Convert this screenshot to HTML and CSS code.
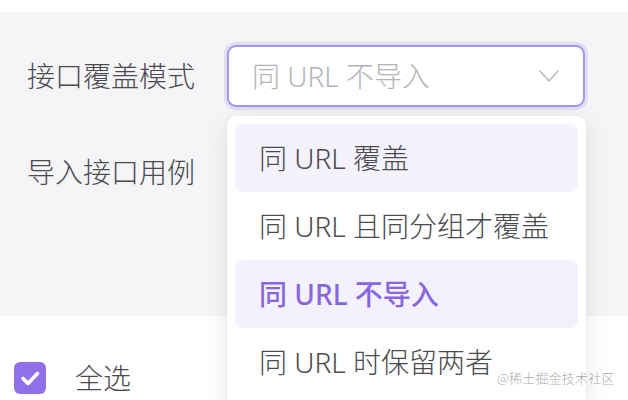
FILE: index.html
```html
<!DOCTYPE html>
<html lang="zh-CN">
<head>
<meta charset="utf-8">
<title>导入设置</title>
<link rel="stylesheet" href="styles.css">
</head>
<body>
<div class="page">
  <div class="top-gap"></div>
  <section class="form">
    <div class="label">接口覆盖模式</div>
    <div class="select">
      <span class="placeholder">同 URL 不导入</span>
      <svg class="chevron" width="20" height="12" viewBox="0 0 20 12"><polyline points="1,1 10,11 19,1" fill="none" stroke="#b9b9bd" stroke-width="1.6" stroke-linecap="round" stroke-linejoin="round"/></svg>
    </div>
    <div class="label">导入接口用例</div>
    <div></div>
  </section>
  <section class="bottom">
    <span class="checkbox">
      <svg width="32" height="32" viewBox="0 0 32 32"><path d="M9 16.5 L14 21.5 L23.5 11.5" fill="none" stroke="#fff" stroke-width="3.6" stroke-linecap="round" stroke-linejoin="round"/></svg>
    </span>
    <span class="check-label">全选</span>
  </section>

  <ul class="dropdown">
    <li class="option hover">同 URL 覆盖</li>
    <li class="option">同 URL 且同分组才覆盖</li>
    <li class="option selected">同 URL 不导入</li>
    <li class="option">同 URL 时保留两者</li>
  </ul>
  <div class="watermark">@稀土掘金技术社区</div>
</div>
</body>
</html>
```
FILE: styles.css
```css
html, body {
  margin: 0;
  padding: 0;
  height: 400px;
  overflow: hidden;
  background: #ffffff;
}
body {
  font-family: "Noto Sans", "Noto Sans CJK SC", sans-serif;
  font-weight: 300;
  color: #4d4d52;
}
.page {
  position: relative;
  width: 628px;
  height: 400px;
  overflow: hidden;
}
.top-gap {
  height: 12px;
  background: #ffffff;
}
.form {
  background: #f5f5f8;
  height: 304px;
  box-sizing: border-box;
  padding: 33px 0 0 27px;
  display: grid;
  grid-template-columns: 200px 358px;
  grid-template-rows: 62px 62px;
  row-gap: 34px;
  align-items: center;
}
.label {
  font-size: 28px;
  line-height: 1;
  color: #4a4a4f;
  padding-bottom: 1px;
}
.select {
  height: 62px;
  box-sizing: border-box;
  border: 2px solid #a896ee;
  border-radius: 9px;
  background: #ffffff;
  box-shadow: 0 0 0 3px rgba(150, 125, 235, 0.2);
  display: flex;
  align-items: center;
  justify-content: space-between;
  padding: 0 24px 0 23px;
}
.placeholder {
  font-size: 28px;
  color: #b4b4b8;
  line-height: 1;
}
.chevron {
  display: block;
}
.bottom {
  display: flex;
  align-items: center;
  padding: 46px 0 0 14px;
}
.checkbox {
  width: 32px;
  height: 32px;
  border-radius: 6px;
  background: #8f70e8;
  display: flex;
}
.check-label {
  margin-left: 29px;
  font-size: 28px;
  line-height: 1;
  color: #4a4a4f;
}
.dropdown {
  position: absolute;
  left: 227px;
  top: 116px;
  width: 359px;
  height: 320px;
  margin: 0;
  padding: 8px 8px;
  box-sizing: border-box;
  list-style: none;
  background: #ffffff;
  border-radius: 9px;
  box-shadow: 0 6px 28px rgba(0, 0, 0, 0.09), 0 2px 6px rgba(0, 0, 0, 0.04);
}
.option {
  height: 68px;
  display: flex;
  align-items: center;
  padding-left: 24px;
  border-radius: 8px;
  font-size: 28px;
  line-height: 1;
  color: #4a4a4f;
}
.option.hover {
  background: #f4f2fd;
}
.option.selected {
  background: #f4f1fe;
  color: #8766e0;
  font-weight: 500;
}
.watermark {
  position: absolute;
  left: 497px;
  top: 369px;
  font-family: "Noto Sans CJK SC", sans-serif;
  font-size: 13px;
  line-height: 18px;
  color: rgba(140, 140, 145, 0.75);
  letter-spacing: 0.2px;
}
```
